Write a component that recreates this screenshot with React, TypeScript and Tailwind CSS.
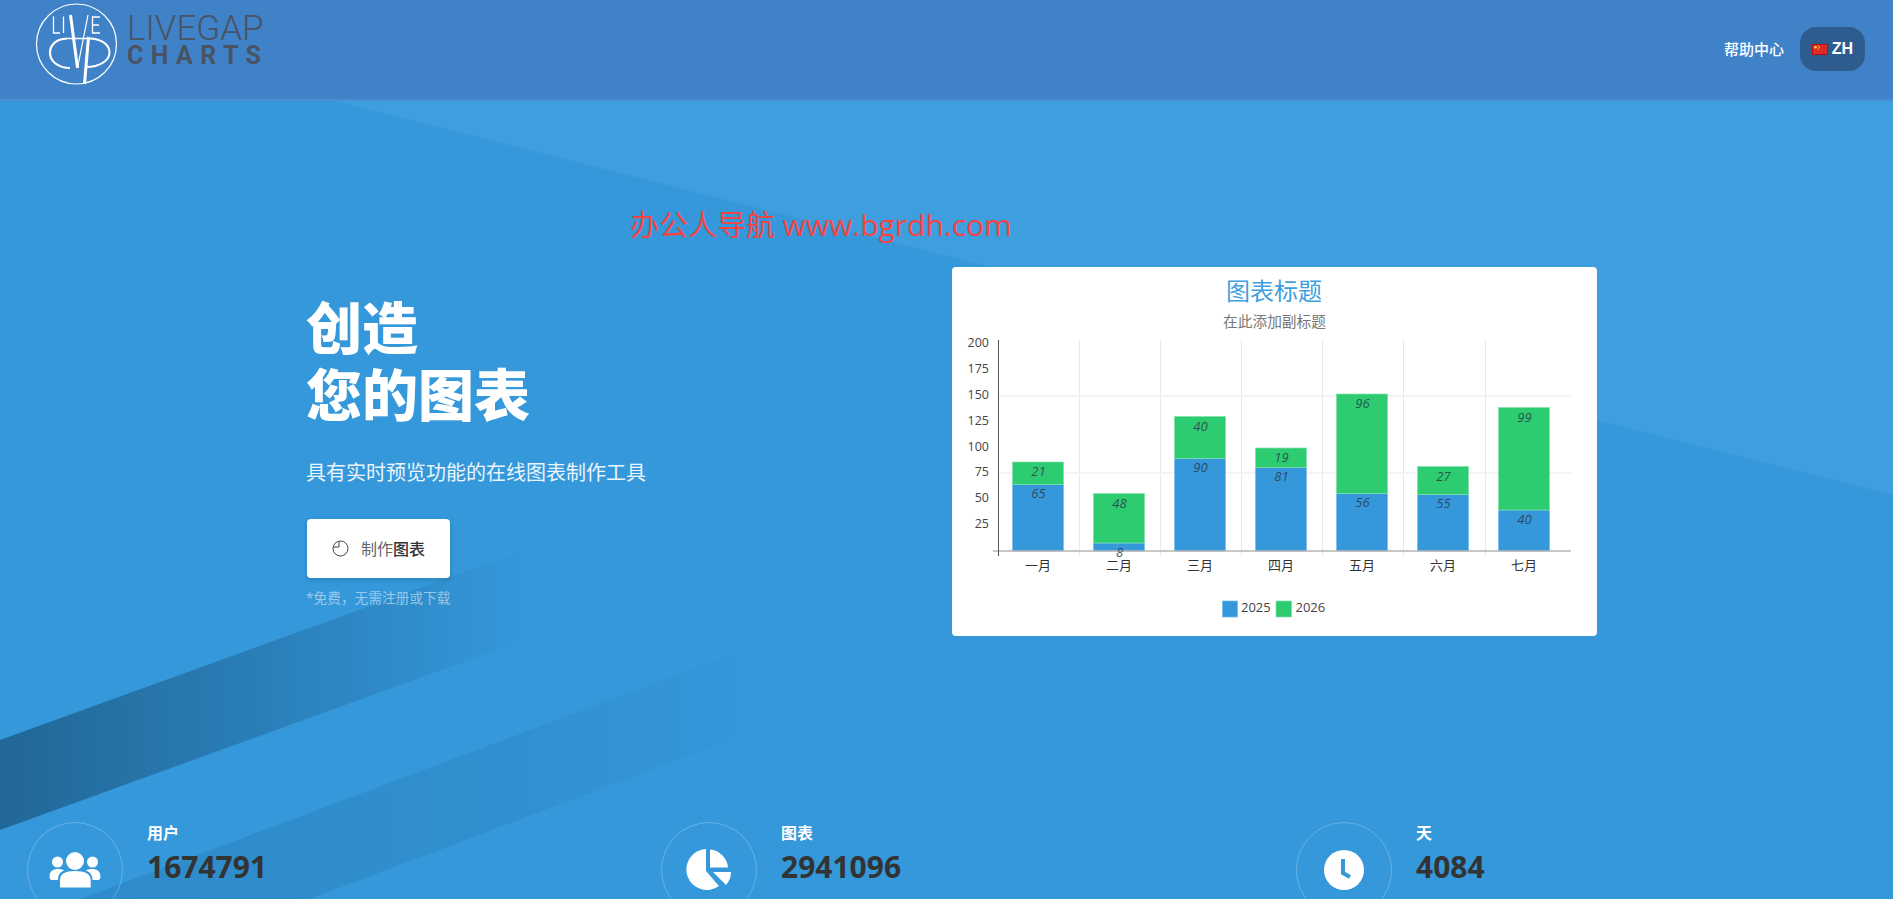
import React from "react";

const months = ["一月", "二月", "三月", "四月", "五月", "六月", "七月"];
const bars = [
  { x: 1012.5, blueTop: 484.5, greenTop: 462, a: "65", b: "21" },
  { x: 1093.5, blueTop: 543, greenTop: 493.5, a: "8", b: "48" },
  { x: 1174.5, blueTop: 458.5, greenTop: 416.5, a: "90", b: "40" },
  { x: 1255.5, blueTop: 467.5, greenTop: 448, a: "81", b: "19" },
  { x: 1336.5, blueTop: 493.5, greenTop: 394, a: "56", b: "96" },
  { x: 1417.5, blueTop: 494.5, greenTop: 466.5, a: "55", b: "27" },
  { x: 1498.5, blueTop: 510, greenTop: 407.5, a: "40", b: "99" },
];
const ticks = [
  ["200", 342],
  ["175", 368],
  ["150", 394],
  ["125", 420],
  ["100", 446],
  ["75", 471.5],
  ["50", 497],
  ["25", 523],
] as const;

function Background() {
  return (
    <svg className="absolute inset-0 h-full w-full" viewBox="0 0 1893 899" aria-hidden="true">
      <defs>
        <linearGradient id="bandA" gradientUnits="userSpaceOnUse" x1="0" y1="0" x2="530" y2="0">
          <stop offset="0" stopColor="#1d5c88" stopOpacity="0.82" />
          <stop offset="0.4" stopColor="#1d5c88" stopOpacity="0.5" />
          <stop offset="1" stopColor="#1d5c88" stopOpacity="0" />
        </linearGradient>
        <linearGradient id="bandB" gradientUnits="userSpaceOnUse" x1="80" y1="0" x2="770" y2="0">
          <stop offset="0" stopColor="#1d5c88" stopOpacity="0.22" />
          <stop offset="0.6" stopColor="#1d5c88" stopOpacity="0.15" />
          <stop offset="1" stopColor="#1d5c88" stopOpacity="0" />
        </linearGradient>
      </defs>
      <polygon points="335,101 1893,101 1893,495" fill="#3f9ede" />
      <polygon points="0,740 530,548 530,638 0,830" fill="url(#bandA)" />
      <polygon points="80,899 770,640 770,725 310,899" fill="url(#bandB)" />
    </svg>
  );
}

function Logo() {
  return (
    <svg width="86" height="88" viewBox="34 0 86 88" className="shrink-0" aria-hidden="true">
      <circle cx="76.5" cy="44" r="40" fill="none" stroke="#fff" strokeWidth="1.2" />
      <g stroke="#fff" fill="none">
        <path d="M53.500 16.500V33H60M63.500 16.500V33" strokeWidth="1.3" />
        <path d="M100 17H92.500V33H100M92.500 25H99" strokeWidth="1.3" />
        <path d="M70.500 15L77.500 68" strokeWidth="3" />
        <path d="M88 15L77.500 68" strokeWidth="1.2" />
        <path d="M67 38.500H88" strokeWidth="1.5" />
        <path d="M67 38.500C56 39 50 45 50 53C50 61 58 68 70 68" strokeWidth="2.2" />
        <path d="M88 38.500C100 38 109.500 44 109.500 52.500C109.500 61 99 67 86.500 67" strokeWidth="2" />
        <path d="M88.500 37L84.500 84" strokeWidth="3" />
      </g>
    </svg>
  );
}

function Flag() {
  return (
    <svg width="16" height="11" viewBox="0 0 16 11" aria-hidden="true">
      <rect x="0.5" y="0.5" width="15" height="10" fill="#e02a2a" stroke="#b80d0d" />
      <circle cx="3.5" cy="3.2" r="1.3" fill="#ffde3a" />
      <circle cx="6.3" cy="1.8" r="0.6" fill="#ffde3a" />
      <circle cx="7.2" cy="3.2" r="0.6" fill="#ffde3a" />
      <circle cx="6.5" cy="4.9" r="0.6" fill="#ffde3a" />
    </svg>
  );
}

function Chart() {
  return (
    <svg width="645" height="369" viewBox="952 267 645 369" className="block">
      <text x="1274" y="300" textAnchor="middle" fontSize="24" fill="#3f9fe0">图表标题</text>
      <text x="1274.500" y="326.500" textAnchor="middle" fontSize="14.7" fill="#777">在此添加副标题</text>
      {[1079.5, 1160.5, 1241.5, 1322.5, 1403.5, 1485.5].map((x) => (
        <line key={x} x1={x} x2={x} y1="340" y2="556" stroke="#e8e8e8" />
      ))}
      {[396, 473].map((y) => (
        <line key={y} x1="999" x2="1571" y1={y} y2={y} stroke="#f0f0f0" strokeWidth="1.5" />
      ))}
      {bars.map((b) => (
        <g key={b.x}>
          <rect x={b.x} y={b.blueTop} width="51" height={551 - b.blueTop} fill="#3498db" stroke="#74bbec" strokeWidth="0.7" />
          <rect x={b.x} y={b.greenTop} width="51" height={b.blueTop - b.greenTop} fill="#2ecc71" stroke="#7fe3a8" strokeWidth="0.7" />
        </g>
      ))}
      <line x1="993" x2="1571" y1="551" y2="551" stroke="#b5b5b5" strokeWidth="1.5" />
      <line x1="998.5" x2="998.5" y1="340" y2="556" stroke="#555" />
      {ticks.map(([t, y]) => (
        <text key={t} x="989" y={y + 4.5} textAnchor="end" fontSize="12.5" fill="#444">{t}</text>
      ))}
      {bars.map((b, i) => (
        <g key={b.a + b.b} fontSize="13" fontStyle="italic" fill="#2a3b4a" fillOpacity="0.85">
          <text x={b.x + 26} y={(i === 1 ? 552 : b.blueTop + 9) + 4.5} textAnchor="middle">{b.a}</text>
          <text x={b.x + 26} y={b.greenTop + 9.5 + 4.5} textAnchor="middle">{b.b}</text>
        </g>
      ))}
      {months.map((m, i) => (
        <text key={m} x={bars[i].x + 25.5} y="570" textAnchor="middle" fontSize="13" fill="#333">{m}</text>
      ))}
      <rect x="1222.5" y="601" width="15" height="16" fill="#3498db" stroke="#74bbec" strokeWidth="0.7" />
      <text x="1241" y="612" fontSize="13" fill="#444">2025</text>
      <rect x="1276" y="601" width="15.5" height="16" fill="#2ecc71" stroke="#7fe3a8" strokeWidth="0.7" />
      <text x="1295.5" y="612" fontSize="13" fill="#444">2026</text>
    </svg>
  );
}

function UsersIcon() {
  return (
    <svg width="52" height="36" viewBox="49 853 52 36" fill="#fff" aria-hidden="true">
      <circle cx="75" cy="862" r="9" />
      <circle cx="57.5" cy="863" r="5.5" />
      <circle cx="92.5" cy="863" r="5.5" />
      <path d="M60 888.5V881C60 875 65 872 75 872S90.7 875 90.7 881V888.5Q90.7 888.5 88 888.5H63Q60 888.5 60 888.5Z" />
      <path d="M49.5 878C49.5 872 53 870 58 870C61 870 63 870.5 64 871.5C60 873 58 876 58 881H52C50.500 881 49.500 880 49.500 878Z" />
      <path d="M100.500 878C100.500 872 97 870 92 870C89 870 87 870.500 86 871.500C90 873 92.500 876 92.500 881H98C99.500 881 100.500 880 100.500 878Z" />
    </svg>
  );
}

function PieIcon() {
  return (
    <svg width="46" height="42" viewBox="686 850 46 42" fill="#fff" aria-hidden="true">
      <path d="M706 850A20.500 20.500 0 1 0 719 887L706 872Z" />
      <path d="M710 850.500A20 20 0 0 1 728 868.500H710Z" />
      <path d="M713 873H731A20 20 0 0 1 726 886Z" />
    </svg>
  );
}

function ClockIcon() {
  return (
    <svg width="40" height="40" viewBox="1324 850 40 40" aria-hidden="true">
      <circle cx="1344" cy="870" r="20" fill="#fff" />
      <path d="M1343 859V873L1350 877" fill="none" stroke="#3498db" strokeWidth="4" />
    </svg>
  );
}

function Stat({ label, value, icon }: { label: string; value: string; icon: React.ReactNode }) {
  return (
    <div className="flex items-start gap-6">
      <div className="flex h-24 w-24 shrink-0 items-center justify-center rounded-full border border-white/25">
        {icon}
      </div>
      <div className="flex flex-col">
        <div className="text-[16px] leading-[22px] font-semibold text-white">{label}</div>
        <div className="mt-[1px] text-[30px] leading-[44px] font-bold text-[#333]">{value}</div>
      </div>
    </div>
  );
}

export default function App() {
  return (
    <div className="relative h-[899px] w-full overflow-hidden bg-[#3498db] font-['Open_Sans','Noto_Sans_CJK_SC',sans-serif]">
      <Background />
      <header className="relative flex h-[101px] items-start justify-between border-b-2 border-[#4a8fd3] bg-[#3f82c8] pl-[34px] pr-[28px]">
        <div className="flex items-start">
          <Logo />
          <div className="ml-[7px] flex flex-col pt-[12px] font-['Roboto','Noto_Sans_CJK_SC',sans-serif] text-[#4a5364]">
            <span className="text-[35px] leading-[33px] font-light">LIVEGAP</span>
            <span className="text-[25px] leading-[22px] font-bold tracking-[7.4px]">CHARTS</span>
          </div>
        </div>
        <div className="flex items-center gap-4 pt-[27px]">
          <a className="text-[15px] font-medium text-white">帮助中心</a>
          <div className="flex h-11 w-[65px] items-center justify-center gap-1 rounded-2xl bg-[#2e5c8f]">
            <Flag />
            <span className="font-['Liberation_Sans',sans-serif] text-[16px] font-bold text-white">ZH</span>
          </div>
        </div>
      </header>

      <main className="relative">
        <section className="flex items-start pt-[166px] pl-[306px]">
          <div className="w-[646px] pt-[27px]">
            <h1 className="text-[56px] leading-[67px] font-black text-white">
              创造
              <br />
              您的图表
            </h1>
            <p className="mt-[30px] text-[20px] leading-[30px] text-white/90">具有实时预览功能的在线图表制作工具</p>
            <button className="mt-[31px] ml-[1px] flex h-[59px] w-[143px] items-center justify-start gap-[12px] rounded-[4px] bg-white pl-[25px] shadow-[0_2px_5px_rgba(0,0,0,0.15)]">
              <svg width="17" height="17" viewBox="0 0 17 17" fill="none" stroke="#444" strokeWidth="1" aria-hidden="true">
                <circle cx="8.5" cy="8.5" r="7.500" />
                <path d="M7 1V7H1" />
              </svg>
              <span className="text-[16px] font-normal text-[#666]">
                制作<span className="font-medium text-[#333]">图表</span>
              </span>
            </button>
            <p className="mt-[9px] text-[13.7px] leading-[21px] text-white/50">*免费，无需注册或下载</p>
          </div>
          <div className="w-[645px] overflow-hidden rounded-[4px] bg-white">
            <Chart />
          </div>
        </section>

        <section className="mt-[186px] grid grid-cols-[634px_635px_1fr] pl-[27px]">
          <Stat label="用户" value="1674791" icon={<UsersIcon />} />
          <Stat label="图表" value="2941096" icon={<PieIcon />} />
          <Stat label="天" value="4084" icon={<ClockIcon />} />
        </section>
      </main>

      <div className="absolute top-[204px] left-[630px] text-[29px] leading-[42px] whitespace-nowrap text-[#f44444]">
        办公人导航 <span className="text-[30px]">www.bgrdh.com</span>
      </div>
    </div>
  );
}
